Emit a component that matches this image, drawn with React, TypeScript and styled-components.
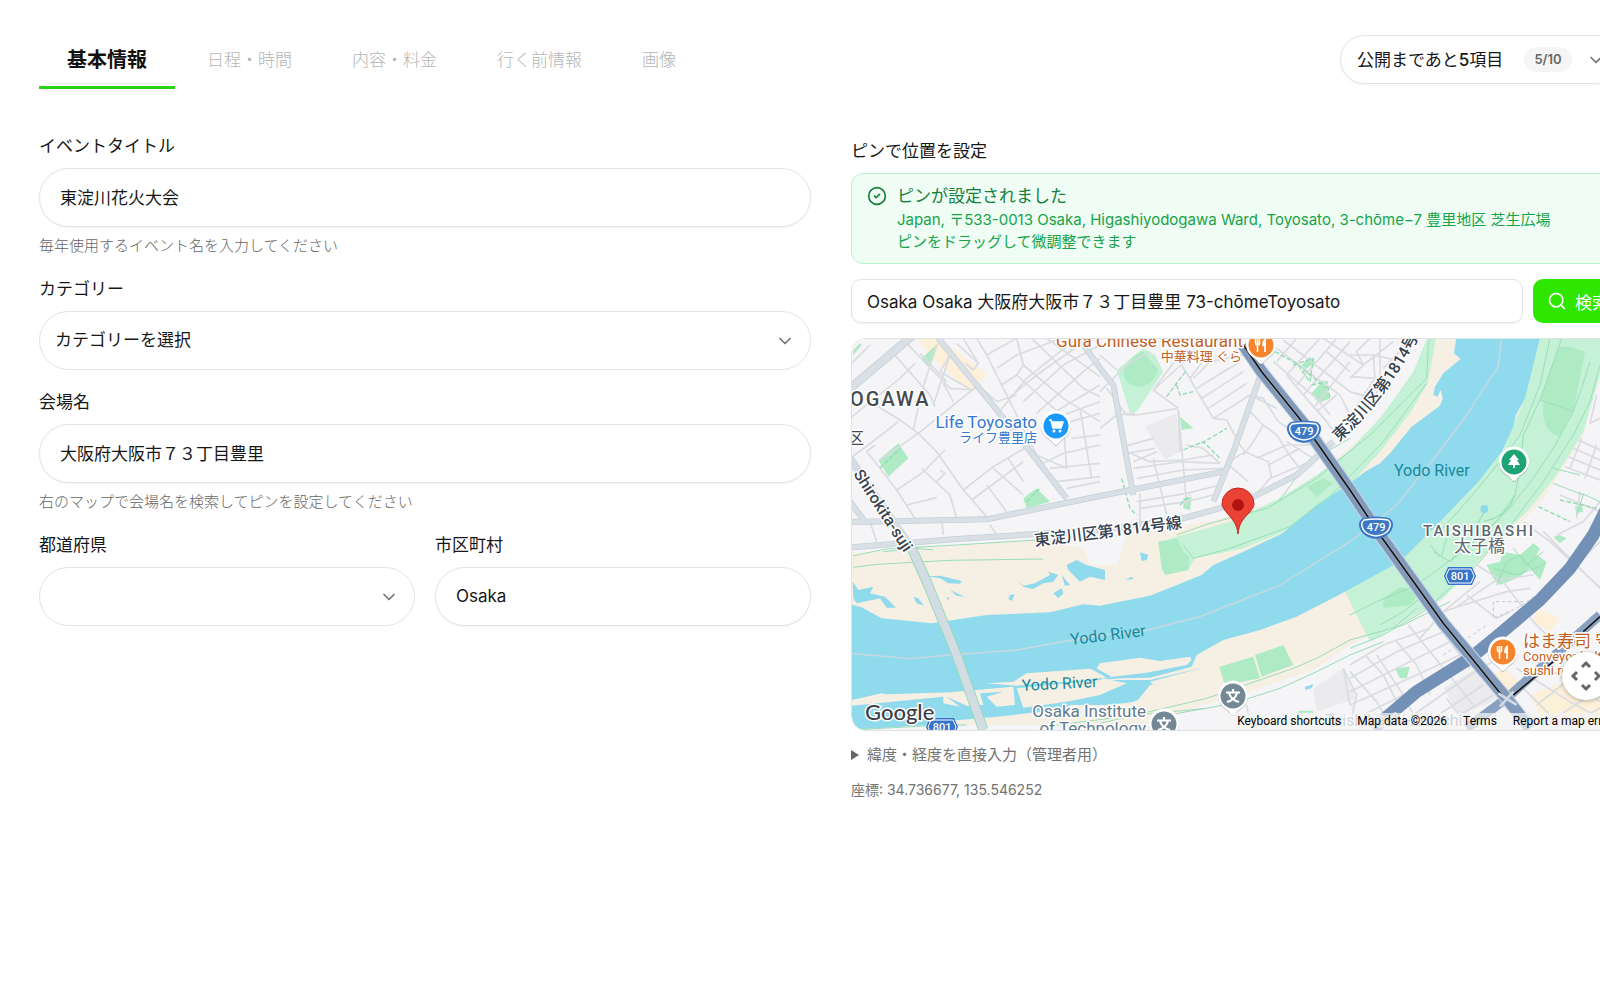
import React from 'react';
import styled, { createGlobalStyle } from 'styled-components';
import { ChevronDown, CircleCheck, Search } from 'lucide-react';

const GlobalStyle = createGlobalStyle`
  *, *::before, *::after { box-sizing: border-box; }
  html, body { margin: 0; background: #fff; overflow-x: hidden; }
  body, button, input, select {
    font-family: Inter, "Noto Sans CJK JP", sans-serif;
    font-size: 17px;
    color: #171717;
  }
`;

const Page = styled.div`
  width: calc(100% + 64px);
  padding: 35px 41px 40px 39px;
`;

const Header = styled.header`
  display: flex;
  justify-content: space-between;
  align-items: flex-start;
  margin-bottom: 44px;
`;

const Tabs = styled.nav`
  display: flex;
  gap: 4px;
`;

const Tab = styled.button<{ $active?: boolean }>`
  height: 54px;
  padding: 0 28px 2px;
  border: 0;
  border-bottom: 3px solid ${(p) => (p.$active ? '#2bd414' : 'transparent')};
  background: none;
  color: ${(p) => (p.$active ? '#111' : '#b5b5b5')};
  font-size: ${(p) => (p.$active ? 20 : 17)}px;
  font-weight: ${(p) => (p.$active ? 700 : 300)};
  line-height: 24px;
  white-space: nowrap;
`;

const ProgressPill = styled.button`
  display: flex;
  align-items: center;
  width: 283px;
  height: 49px;
  padding: 0 16px;
  border: 1px solid #e3e3e3;
  border-radius: 25px;
  background: #fff;
  box-shadow: 0 1px 2px rgba(0, 0, 0, 0.05);
  white-space: nowrap;
`;

const PillText = styled.span`
  flex: 1;
  padding-bottom: 2px;
  text-align: left;
  b { font-weight: 500; }
`;

const Count = styled.span`
  width: 48px;
  margin-right: 14px;
  border-radius: 13px;
  background: #f5f5f5;
  color: #666;
  font-size: 13px;
  font-weight: 600;
  line-height: 25px;
  text-align: center;
`;

const Columns = styled.main`
  display: grid;
  grid-template-columns: 1fr 1fr;
  gap: 40px;
  align-items: start;
  margin-top: 45px;
`;

const Form = styled.form`
  display: flex;
  flex-direction: column;
  gap: 20px;
`;

const FieldRow = styled.div`
  display: grid;
  grid-template-columns: 1fr 1fr;
  gap: 20px;
`;

const Field = styled.div`
  display: flex;
  flex-direction: column;
`;

const Label = styled.label`
  margin-bottom: 10px;
  line-height: 24px;
`;

const Hint = styled.p`
  margin: 8px 0 0;
  color: #666;
  font-size: 15px;
  font-weight: 300;
  line-height: 22px;
`;

const TextInput = styled.input`
  width: 100%;
  height: 59px;
  padding: 0 20px 2px;
  border: 1px solid #e3e3e3;
  border-radius: 30px;
  background: #fff;
  outline: 0;
  box-shadow: 0 1px 2px rgba(0, 0, 0, 0.05);
`;

const SelectBox = styled.div`
  display: grid;
  align-items: center;
  > * { grid-area: 1 / 1; }
  > svg { justify-self: end; margin-right: 16px; color: #737373; pointer-events: none; }
`;

const Select = styled.select`
  width: 100%;
  height: 59px;
  padding: 0 40px 2px 15px;
  border: 1px solid #e3e3e3;
  border-radius: 30px;
  background: #fff;
  appearance: none;
  outline: 0;
`;

const PinPanel = styled.section`
  display: flex;
  flex-direction: column;
  padding-top: 5px;
`;

const Notice = styled.div`
  display: flex;
  gap: 10px;
  padding: 10px 15px;
  border: 1px solid #b9f3cd;
  border-radius: 12px;
  background: #effdf4;
  color: #16a34a;
  font-size: 15px;
  line-height: 22px;
  > svg { flex: none; margin-top: 2px; color: #15803d; }
`;

const NoticeTitle = styled.div`
  color: #15803d;
  font-size: 17px;
  line-height: 25px;
`;

const SearchRow = styled.div`
  display: flex;
  gap: 10px;
  margin: 15px 0;
`;

const SearchInput = styled(TextInput)`
  flex: 1;
  width: auto;
  height: 44px;
  padding: 0 15px 2px;
  border-radius: 10px;
`;

const SearchButton = styled.button`
  display: flex;
  align-items: center;
  gap: 8px;
  height: 44px;
  padding: 0 14px;
  border: 0;
  border-radius: 10px;
  background: #2ee600;
  color: #fff;
  white-space: nowrap;
`;

const MapFrame = styled.div`
  position: relative;
  height: 393px;
  border: 1px solid #e0e3e3;
  border-radius: 15px;
  overflow: hidden;
  background: #f5f4f6;
  > svg { display: block; width: 100%; height: 100%; }
`;

const Attribution = styled.div`
  position: absolute;
  right: 0;
  bottom: 0;
  display: flex;
  align-items: center;
  gap: 16px;
  height: 17px;
  padding: 0 9px;
  background: rgba(245, 245, 245, 0.7);
  color: #000;
  font: 12px/17px Roboto, sans-serif;
  white-space: nowrap;
  a, button { padding: 0; border: 0; background: none; color: inherit; font: inherit; text-decoration: none; }
`;

const CameraButton = styled.button`
  position: absolute;
  right: 12px;
  bottom: 30px;
  width: 48px;
  height: 48px;
  padding: 4px;
  border: 0;
  border-radius: 50%;
  background: #fff;
  box-shadow: 0 1px 4px rgba(0, 0, 0, 0.3);
`;

const Details = styled.details`
  margin-top: 13px;
  color: #737373;
  font-size: 15px;
  line-height: 22px;
`;

const Summary = styled.summary`
  display: flex;
  align-items: center;
  gap: 8px;
  list-style: none;
  &::-webkit-details-marker { display: none; }
`;

const Coordinates = styled.p`
  margin: 13px 0 0;
  color: #737373;
  font-size: 14px;
  line-height: 22px;
`;

const MapText = styled.text<{ $size: number; $color: string; $weight?: number; $tracking?: number }>`
  font-family: Roboto, "Noto Sans CJK JP", sans-serif;
  font-size: ${(p) => p.$size}px;
  font-weight: ${(p) => p.$weight ?? 400};
  letter-spacing: ${(p) => p.$tracking ?? 0}px;
  fill: ${(p) => p.$color};
  stroke: #fff;
  stroke-width: 3px;
  stroke-linejoin: round;
  paint-order: stroke;
`;

const WaterText = styled(MapText)`
  stroke: none;
`;

const minorStreets = [
  // north-west blocks
  'M0 90L60 30 M0 250L150 130 195 85 M50 175L85 215 150 255 205 295 260 350 340 465 410 545',
  'M130 55L240 180 255 215 M165 20L300 160 370 165 M210 55L290 140 M260 30L215 170 190 285',
  'M300 60L250 210 M300 60L270 110 365 165 M205 295L385 150 440 200 M280 145L310 200 M320 25L385 85 370 105 345 85',
  'M340 10L385 85 M0 370L55 330 145 260 M75 330L50 350 90 400 140 465 195 550',
  'M90 375L205 295 M140 465L215 415 285 345 M170 510L260 488 M215 400L300 480 320 550',
  'M260 440L285 415 270 405 M340 465L430 395 540 330 M365 495L520 380 M430 400L520 480 M475 370L520 440 M410 450L470 530',
  'M440 200L500 180 M380 10L410 60 455 150 500 240 560 360 580 385 M410 60L500 10 M500 10L520 90 500 120 455 150',
  'M520 90L640 190 750 260 M545 10L700 160 750 185 M440 240L530 130 680 10 M475 190L560 120 710 15 M520 200L640 90 750 30',
  'M590 10L750 125 M560 235L700 110 750 70 M600 240L750 150 M500 120L600 210 660 260 M440 100L500 60 620 15',
  'M640 270L650 400 M690 220L725 430 M580 385L640 355 750 330 M600 400L700 390 750 385 M640 240L750 200 M660 260L750 235 M665 310L750 300',
  'M560 360L650 400 M620 440L750 425 M650 460L750 440 M275 550L280 600 M420 570L440 600',
  'M60 560L80 620',
  // centre blocks
  'M750 170L830 90 900 50 M770 160L830 240 860 240 M750 280L800 240 855 235 M985 225L990 350 M860 240L985 220',
  'M800 105L750 60 M985 220L910 165 980 70 1000 100 1020 130 1030 150 1090 250 1130 255 M910 165L1010 75 1050 10',
  'M1030 130L1080 80 1180 60 M1040 160L1170 80 M1055 190L1180 110 M1075 220L1190 145 M1090 250L1200 180 M1020 130L1110 10 M1010 80L960 10',
  'M1130 255L1170 330 1185 350 1255 380 1265 430 M1195 225L1240 270 1280 300 M1200 180L1240 190 1285 260 1340 300 M1220 190L1280 220',
  'M840 355L900 380 1000 375 1090 360 M850 400L990 380 1110 385 M860 430L1000 405 1120 400',
  'M820 335L910 310 M830 355L915 340 M910 370L950 540 M850 380L920 350 M870 475L870 560 M860 500L1010 475 1110 450 M870 520L1010 500 1090 480',
  'M985 225L1010 510 M1010 330L1060 340 1110 385 M1185 350L1130 385 1195 440',
  'M1180 360L1210 320 1240 270 M1220 370L1310 330 1430 330 M1255 390L1350 340 M1280 300L1325 370 1350 400 M1310 320L1390 370 M1340 300L1410 350',
  'M1200 500L1260 430 1370 385 1440 320',
  // north-east blocks
  'M1280 40L1400 130 1470 180 M1300 15L1500 170 M1270 80L1400 190 1440 240 M1340 10L1280 80 M1410 10L1310 120 M1460 10L1340 150',
  'M1500 20L1360 180 M1500 80L1390 220 M1310 120L1360 180 1430 260 1460 300 M1430 50L1500 110 M1460 180L1400 230',
  'M1500 130L1540 90 1520 50 1560 10 M1540 90L1630 20 M1500 60L1570 60 1660 80 M1570 60L1575 130 1500 125 M1590 10L1590 130 M1575 130L1515 220 1510 290',
  'M1500 170L1570 190 1600 140 M1470 180L1500 240 1500 290 M1420 10L1540 90 M1600 100L1680 20',
  // east bank blocks
  'M2185 315L2250 345 M2170 340L2250 375 M2155 365L2250 405 M2145 395L2250 435 M2195 310L2160 400 M2240 330L2205 430 M2250 250L2220 265 2240 180',
  'M2250 500L2200 560 2120 600 M2130 480L2250 530 M2190 470L2180 550',
  'M2020 560L2100 620 2220 730 2300 800 M2080 590L2250 760 M2180 690L2250 620',
  'M1880 690L1960 740 2050 860 2110 920 M1890 740L1780 830 1710 910 M1850 780L1940 850 1980 830 M1820 815L1940 735 2050 720 M1750 840L1840 810 1970 770 2040 760',
  'M1675 870L1740 950 1830 1060 1870 1110 M1740 840L1860 1000 M1640 920L1700 990 1740 1080 M1545 960L1600 1020 1650 1120 M1500 990L1600 930 1740 880',
  'M1500 1030L1640 950 1780 890 M1500 1070L1660 990 1800 920 M1500 1110L1700 1020 1830 960 M1520 1150L1720 1050 M1500 1010L1580 1100 1620 1170 M1580 960L1660 1080 1690 1140',
  'M1690 1140L1860 1020 1960 960 M1720 1170L1900 1050 M1780 1170L1930 1080 M1830 1130L1880 1170 M1790 1090L1850 1170',
  'M2030 960L2250 1100 M2000 1000L2160 1100 2250 1150 M2060 1110L2200 1000 2250 960 M2020 1060L2120 1160 M2100 1160L2250 1060 M2150 1170L2250 1120',
  'M1480 1000L1520 1080 1500 1170 M1480 1000L1500 1110 M1190 1110L1200 1170',
];

const bankPaths = [
  'M10 662L110 642 320 630 560 615 M10 697L80 688 300 676 580 672 M100 650L200 640 250 645',
  'M980 600L1080 565 1250 520 1400 430 1560 300 1660 200 1730 130 1735 30 1740 10',
  'M1000 630L1030 670 1140 640 1320 575 1440 485 1600 320 1730 145 M1285 500L1330 440 1360 390 1500 310',
  'M2100 10L2070 150 2010 300 1950 380 1850 500 1760 600',
  'M2220 80L2195 160 2165 240 2110 340 2050 430 1970 530 1850 640 1700 750 1580 800 1500 840',
  'M2135 10L2090 140 2070 195 2170 230 M2070 195L2020 300 2010 400 1995 480 1940 560 1800 680',
  'M2250 90L2220 200 2170 300 2080 440 1990 560 1880 690 1720 830 1600 900 1500 940',
  'M750 1165L1070 1090 1200 1045 1330 1000 1400 970 1500 915 1660 870 1800 800',
  'M900 1150L1150 1105 1290 1060 1400 1010 1500 960 1600 920',
  'M620 1170L860 1140 1070 1120 M0 1185L240 1172 350 1170',
  'M1775 660L1790 610 M1750 650L1800 680 1830 645 M1740 630L1770 665 M1590 870L1660 830 1710 790 M1630 880L1700 820',
  'M1940 750L1970 680 2010 660 2060 720 M1930 700L2000 720 2080 690 M1990 640L2030 690 2080 650',
  'M2190 420L2110 400 M2110 445L2200 480 2180 540 M2195 475L2250 500',
];

const dashedPaths = [
  'M950 185L1010 105 M980 150L990 180 1030 170 M1000 345L1060 320 1110 370 M1055 325L1130 280',
  'M815 430L840 520 860 540 M990 510L1020 480 M1275 50L1330 80 1430 160',
  'M1330 90L1390 70 1380 140 1350 100 M1385 150L1430 140 1440 190',
  'M2065 515L2160 560 M2130 495L2240 520 M90 400L150 340 M530 500L570 460',
];

const regionalShields = [
  { x: 1304, y: 432, text: '479' },
  { x: 1376, y: 528, text: '479' },
];

const prefecturalShields = [
  { x: 1460, y: 576 },
  { x: 942, y: 727 },
];

function Place({ x, y, color, children }: { x: number; y: number; color: string; children: React.ReactNode }) {
  return (
    <g transform={`translate(${x} ${y})`}>
      <path d="M-14 5A15 15 0 1 1 14 5C12 11 5 13 2 18Q0 20-2 18C-5 13-12 11-14 5Z" fill="#59636b" opacity=".35" transform="translate(0 1)" />
      <path d="M-14 5A15 15 0 1 1 14 5C12 11 5 13 2 18Q0 20-2 18C-5 13-12 11-14 5Z" fill="#fff" />
      <circle r="12.5" fill={color} />
      {children}
    </g>
  );
}

function Utensils() {
  return (
    <g fill="#fff" stroke="#fff">
      <path d="M-5.500-6V-2.500Q-5.500 0-3.500 0Q-1.500 0-1.500-2.500V-6M-3.500-6V7" fill="none" strokeWidth="1.500" />
      <path d="M4.500-6.500Q1.500-5 1.500-1V1H4.500Z" strokeWidth=".5" />
      <path d="M4-6V7" strokeWidth="1.700" />
    </g>
  );
}

function School() {
  return <path d="M0-7V-4M-7-3.500H7M-4-3Q-2 4 6 6M4-3Q2 4-6 6" fill="none" stroke="#fff" strokeWidth="2.200" />;
}

function MapDrawing() {
  return (
    <svg viewBox="852 339 770 391" preserveAspectRatio="xMinYMin slice" role="img" aria-label="地図">
      <defs>
        <path id="bank-road" d="M1339 442Q1390 396 1423 328" />
      </defs>
      <g transform="translate(850 335) scale(.33333)" fill="none" strokeLinejoin="round">
        <rect width="2340" height="1200" fill="#f5f4f6" />

        {/* commercial blocks */}
        <path d="M200 10H265L410 115 365 175 255 75ZM2060 820L2130 850 2100 890 2050 860ZM1890 1050L1960 1000 2010 1040 1960 1110ZM2040 1080L2250 1000V1170H2080Z" fill="#fdf0d8" />
        <path d="M885 275L980 235 990 350 945 375ZM1390 1060L1480 1000 1520 1090 1400 1130ZM1780 1060L1880 1000 1950 1090 1830 1140Z" fill="#ebeaec" />

        {/* river banks */}
        <path d="M0 655L560 615 700 640 720 690 800 690 830 600 1100 555 1300 490 1430 400 1570 270 1660 165 1720 60 1735 0H2250V110L2200 300 2090 480 1980 600 1740 820 1500 930 1400 1000 1200 1070 1060 1110 880 1170H0Z" fill="#f5efe4" />

        {/* parks along the river */}
        <path d="M1735 0L1690 110 1590 250 1500 345 1400 420 1290 490 1140 560 980 605 925 625 960 715 1015 705 1035 670 1180 640 1280 600 1400 530 1500 450 1590 350 1680 235 1733 145 1760 0Z" fill="#c5f2d6" />
        <path d="M1370 455L1420 430 1450 445 1400 485ZM925 620L980 610 1000 650 1018 665 1015 705 945 720 935 700Z" fill="#aeebc5" />
        <path d="M2070 0H2250V120L2200 290 2120 420 2040 520 1940 620 1780 790 1560 920 1485 770 1650 680 1740 580 1850 460 1960 340 2025 190Z" fill="#c5f2d6" />
        <path d="M2125 40Q2140 25 2205 50L2170 230 2070 195ZM2080 200L2165 230 2130 305Q2070 290 2080 200ZM1600 790L1650 755 1710 775 1680 810 1600 820Z" fill="#aeebc5" />
        <path d="M1910 690L1950 680 1960 650 2010 660 2050 625 2070 640 2060 660 2090 680 2070 735 2040 700 2010 725 1950 750 1930 730ZM2110 605L2130 600 2150 610 2130 625Z" fill="#aeebc5" />
        <path d="M1108 995L1210 965 1230 1030 1125 1050ZM1215 960L1300 930 1330 990 1235 1025ZM1345 1127H1390V1133H1345ZM1635 1000L1680 995 1670 1030 1650 1030Z" fill="#aeebc5" />
        <path d="M800 105L880 40 915 60 940 110 860 230 840 235Z" fill="#c5f2d6" />
        <path d="M820 110Q840 60 880 50L925 105Q910 150 870 155Q820 150 820 110ZM85 375L145 325 175 370 115 425ZM215 70L265 25 240 100ZM520 490L560 460 600 500 530 520ZM990 245L1030 280 995 285ZM1000 490L1025 485 1020 525 1000 520ZM1385 175L1420 135 1440 190 1405 205ZM1355 90L1380 65 1395 80 1365 105ZM10 45L30 25 35 30 10 60ZM2175 515L2195 510 2200 530 2180 535Z" fill="#aeebc5" />

        {/* Yodo River */}
        <path d="M0 808L35 817 95 850 245 865 410 840 600 832 700 808 750 812 900 782 1055 720 1090 690 1180 650 1295 596 1400 510 1500 445 1545 410 1590 385 1620 355 1685 275 1770 212 1778 190 1772 165 1762 185 1750 180 1755 155 1780 115 1832 72 1812 55 1820 0H2072L2045 110 2025 190 1998 240 1990 275 1955 350 1885 440 1770 560 1650 680 1485 770 1340 845 1230 885 1120 915 1040 960 1025 995 900 1028 810 1030 760 1035 900 1035 1070 995 900 1040 930 1070 850 1100 820 1110 660 1110 590 1170H240L0 1185Z" fill="#90daed" />
        <path d="M5 1095L95 1075 110 1078 300 1072 490 1055 495 1110 440 1115 410 1085 460 1070 390 1075 400 1110 350 1112 290 1085 330 1115 280 1105 280 1085 5 1112ZM410 1045L490 1040 530 1015 740 1000 750 985 870 968 930 978 1020 965 1025 975 1010 990 890 1013 750 1030 690 1037 580 1045 500 1052ZM500 1060L750 1035 760 1030 830 1045 750 1080 650 1100 520 1118ZM0 1110L15 1190 0 1190ZM270 1160L440 1145 860 1100 900 1050 1000 1040 880 1170H270Z" fill="#f5efe4" />
        <path d="M720 995L780 1028M840 1045L838 1100" stroke="#90daed" strokeWidth="9" />
        <path d="M0 955L180 971 300 960 500 945 750 900 880 888 1050 845 1290 750 1500 620 1640 510 1760 360 1850 240 1945 95 1955 0" stroke="#cbd7df" strokeWidth="4" />

        {/* ponds */}
        <path d="M8 740L25 765 70 755 60 775 105 785 138 818 110 818 90 790 20 805 10 790ZM190 785L205 790 222 812 200 805ZM230 724L270 722 335 738 330 746 295 745 270 730ZM300 765L345 785 320 782ZM290 785L298 790 292 795ZM500 735L520 752 555 745 600 720 595 710 625 720 610 740 580 745 550 762 520 755ZM610 775L635 760 640 775 625 790ZM480 780L495 778 485 798 475 792ZM635 720L660 750 645 752ZM650 690L680 675 710 690 765 705 765 735 720 725 690 740 655 705ZM870 652L895 660 890 675 875 678ZM825 735L845 725 850 732ZM1365 1055L1390 1048 1385 1060 1365 1065Z" fill="#90daed" />

        {/* street network */}
        <g stroke="#d9dce1" strokeWidth="5">
          {minorStreets.map((d) => <path key={d} d={d} />)}
        </g>
        <g stroke="#9bdcb8" strokeWidth="3">
          {bankPaths.map((d) => <path key={d} d={d} />)}
        </g>
        <g stroke="#8fdcae" strokeWidth="4" strokeDasharray="14 6">
          {dashedPaths.map((d) => <path key={d} d={d} />)}
        </g>
        <path d="M1980 10H2250M2020 800H1930V850L2000 820 2060 780M1780 960L1910 870" stroke="#c5c8cd" strokeWidth="3" strokeDasharray="10 8" />

        {/* main roads */}
        <g stroke="#c3ced7" strokeWidth="18">
          <path d="M265 10L400 175 510 310 650 490M0 560H50L410 553 750 483 1120 410M750 100L790 150 850 480M1230 125L1150 350 1090 500M0 637L320 612 750 585 1000 550 1180 500 1340 420 1450 320M0 500L45 560M680 0L750 100" />
          <path d="M0 160L190 0" strokeWidth="26" />
        </g>
        <g stroke="#d8e0e6" strokeWidth="14">
          <path d="M265 10L400 175 510 310 650 490M0 560H50L410 553 750 483 1120 410M750 100L790 150 850 480M1230 125L1150 350 1090 500M0 637L320 612 750 585 1000 550 1180 500 1340 420 1450 320M0 500L45 560M680 0L750 100" />
          <path d="M0 160L190 0" strokeWidth="22" />
        </g>
        <path d="M0 370L80 490 185 640" stroke="#d3dce2" strokeWidth="25" />
        <path d="M185 640L230 740 320 960 400 1185" stroke="#8fd8b0" strokeWidth="30" />
        <path d="M185 640L230 740 320 960 400 1185" stroke="#d3dce2" strokeWidth="25" />

        {/* trunk roads and railways */}
        <path d="M1570 1180L1700 1070 1860 970 1940 905 2070 795 2160 700 2230 600 2290 480" stroke="#7391b7" strokeWidth="38" />
        <path d="M1850 1180L1970 1090 2250 840" stroke="#88a0c1" strokeWidth="28" />
        <path d="M1180 30L1235 110 1360 265 1500 465 1590 600 1780 865 1970 1090 2040 1180" stroke="#c8d4e3" strokeWidth="40" />
        <path d="M1180 30L1235 110 1360 265 1500 465 1590 600 1780 865 1970 1090 2040 1180" stroke="#819abb" strokeWidth="34" />
        <path d="M1180 30L1235 110 1360 265 1500 465 1590 600 1780 865 1955 1080M1990 1080L2110 980M2200 890L2250 845" stroke="#a5aeba" strokeWidth="9" />
        <path d="M1180 30L1235 110 1360 265 1500 465 1590 600 1780 865 1955 1080M1990 1080L2110 980M2200 890L2250 845" stroke="#14181d" strokeWidth="5" />
        <path d="M1945 1075L2000 1110M1990 1070L1950 1115" stroke="#d3dae3" strokeWidth="8" />
        <path d="M1995 480Q1975 545 1900 560M1880 570L1903 530" stroke="#8fd8b0" strokeWidth="3" />
        <circle cx="1903" cy="522" r="12" fill="#90daed" />
      </g>

      <MapText x="1243" y="347" textAnchor="end" $size={17} $color="#c4601d">Gura Chinese Restaurant</MapText>
      <MapText x="1242" y="361" textAnchor="end" $size={13} $color="#c4601d">中華料理 ぐら</MapText>
      <MapText x="1037" y="428" textAnchor="end" $size={17} $color="#3478d4">Life Toyosato</MapText>
      <MapText x="1037" y="442" textAnchor="end" $size={13} $color="#3478d4">ライフ豊里店</MapText>
      <MapText x="850" y="406" $size={20} $color="#454a50" $weight={500} $tracking={2}>OGAWA</MapText>
      <MapText x="848" y="444" $size={16} $color="#454a50">区</MapText>
      <MapText transform="translate(853 474) rotate(57)" $size={16} $color="#3b4350" $weight={500}>Shirokita-suji</MapText>
      <MapText transform="translate(1035 546) rotate(-7)" $size={16} $color="#34414f" $weight={500}>東淀川区第1814号線</MapText>
      <MapText $size={16} $color="#34414f" $weight={500}><textPath href="#bank-road">東淀川区第1814号</textPath></MapText>
      <WaterText x="1394" y="476" $size={16} $color="#188899">Yodo River</WaterText>
      <WaterText transform="translate(1071 645) rotate(-7)" $size={16} $color="#188899">Yodo River</WaterText>
      <WaterText transform="translate(1022 691) rotate(-3)" $size={16} $color="#188899">Yodo River</WaterText>
      <MapText x="1146" y="717" textAnchor="end" $size={17} $color="#607b8d">Osaka Institute</MapText>
      <MapText x="1146" y="734" textAnchor="end" $size={17} $color="#607b8d">of Technology</MapText>
      <MapText x="1423" y="536" $size={15} $color="#5c6670" $weight={500} $tracking={2}>TAISHIBASHI</MapText>
      <MapText x="1454" y="552" $size={17} $color="#5c6670">太子橋</MapText>
      <MapText x="1523" y="647" $size={17} $color="#c4601d">はま寿司 守口</MapText>
      <MapText x="1523" y="661" $size={13} $color="#c4601d">Conveyor belt</MapText>
      <MapText x="1523" y="675" $size={13} $color="#c4601d">sushi restaurant</MapText>
      <MapText x="1325" y="726" $size={16} $color="#7e8790">Taishibashi-Imaichi</MapText>

      {regionalShields.map((s) => (
        <g key={s.y} transform={`translate(${s.x} ${s.y})`}>
          <path d="M-13-9Q0-12 13-9Q18-5 15 1Q11 9 0 10Q-11 9-15 1Q-18-5-13-9Z" fill="#3d78c5" stroke="#3d78c5" strokeWidth="2" />
          <path d="M-12-8Q0-10 12-8Q16-5 13 1Q10 7 0 8Q-10 7-13 1Q-16-5-12-8Z" fill="#3d78c5" stroke="#fff" strokeWidth="1.500" />
          <text y="3" textAnchor="middle" fontFamily="Roboto, sans-serif" fontSize="11" fontWeight="500" fill="#fff">{s.text}</text>
        </g>
      ))}
      {prefecturalShields.map((s) => (
        <g key={s.y} transform={`translate(${s.x} ${s.y})`}>
          <path d="M-12-9H12L16 0 12 9H-12L-16 0Z" fill="#3673c9" />
          <path d="M-11-7H11L14 0 11 7H-11L-14 0Z" fill="#3673c9" stroke="#fff" />
          <text y="4" textAnchor="middle" fontFamily="Roboto, sans-serif" fontSize="11" fontWeight="500" fill="#fff">801</text>
        </g>
      ))}

      <Place x={1056} y={426} color="#1a98fb">
        <path d="M-7-6H-5L-3 2H5L7-4H-4" fill="#fff" stroke="#fff" strokeWidth="1.500" strokeLinejoin="round" />
        <circle cx="-2" cy="5" r="1.500" fill="#fff" /><circle cx="4" cy="5" r="1.500" fill="#fff" />
      </Place>
      <Place x={1261} y={345} color="#f5842c"><Utensils /></Place>
      <Place x={1514} y={462} color="#1ea474">
        <path d="M0-8L5-2H3L6 3H1V6H-1V3H-6L-3-2H-5Z" fill="#fff" />
      </Place>
      <Place x={1503} y={652} color="#f5842c"><Utensils /></Place>
      <Place x={1233} y={696} color="#738a96"><School /></Place>
      <Place x={1164} y={724} color="#738a96"><School /></Place>

      <path d="M1238 534C1237 524 1233 520 1227 513Q1222 507 1222 504A16 16 0 1 1 1254 504Q1254 507 1249 513C1242 520 1239 524 1238 534Z" fill="#ea4335" stroke="#c5221f" />
      <circle cx="1238" cy="505" r="6" fill="#b31412" />

      <text x="865" y="720" fontFamily="Lato, sans-serif" fontSize="22" fontWeight="500" fill="#3c4043" stroke="#fff" strokeWidth="3" paintOrder="stroke">Google</text>
    </svg>
  );
}

export default function App() {
  return (
    <>
      <GlobalStyle />
      <Page>
        <Header>
          <Tabs>
            <Tab type="button" $active>基本情報</Tab>
            <Tab type="button">日程・時間</Tab>
            <Tab type="button">内容・料金</Tab>
            <Tab type="button">行く前情報</Tab>
            <Tab type="button">画像</Tab>
          </Tabs>
          <ProgressPill type="button">
            <PillText>公開まであと<b>5</b>項目</PillText>
            <Count>5/10</Count>
            <ChevronDown size={20} color="#737373" />
          </ProgressPill>
        </Header>

        <Columns>
          <Form>
            <Field>
              <Label htmlFor="title">イベントタイトル</Label>
              <TextInput id="title" defaultValue="東淀川花火大会" />
              <Hint>毎年使用するイベント名を入力してください</Hint>
            </Field>
            <Field>
              <Label htmlFor="category">カテゴリー</Label>
              <SelectBox>
                <Select id="category"><option>カテゴリーを選択</option></Select>
                <ChevronDown size={20} />
              </SelectBox>
            </Field>
            <Field>
              <Label htmlFor="venue">会場名</Label>
              <TextInput id="venue" defaultValue="大阪府大阪市７３丁目豊里" />
              <Hint>右のマップで会場名を検索してピンを設定してください</Hint>
            </Field>
            <FieldRow>
              <Field>
                <Label htmlFor="prefecture">都道府県</Label>
                <SelectBox>
                  <Select id="prefecture"><option value="" /></Select>
                  <ChevronDown size={20} />
                </SelectBox>
              </Field>
              <Field>
                <Label htmlFor="city">市区町村</Label>
                <TextInput id="city" defaultValue="Osaka" />
              </Field>
            </FieldRow>
          </Form>

          <PinPanel>
            <Label htmlFor="place">ピンで位置を設定</Label>
            <Notice role="status">
              <CircleCheck size={20} />
              <div>
                <NoticeTitle>ピンが設定されました</NoticeTitle>
                <div>Japan, 〒533-0013 Osaka, Higashiyodogawa Ward, Toyosato, 3-chōme−7 豊里地区 芝生広場</div>
                <div>ピンをドラッグして微調整できます</div>
              </div>
            </Notice>
            <SearchRow>
              <SearchInput id="place" defaultValue="Osaka Osaka 大阪府大阪市７３丁目豊里 73-chōmeToyosato" />
              <SearchButton type="button"><Search size={20} />検索</SearchButton>
            </SearchRow>
            <MapFrame>
              <MapDrawing />
              <Attribution>
                <button type="button">Keyboard shortcuts</button>
                <span>Map data ©2026</span>
                <a href="#terms">Terms</a>
                <a href="#report">Report a map error</a>
              </Attribution>
              <CameraButton type="button" aria-label="Map camera controls">
                <svg viewBox="0 0 40 40" width="40" height="40" fill="none" stroke="#666" strokeWidth="3">
                  <path d="M16 11L20 7 24 11M16 29L20 33 24 29M11 16L7 20 11 24M29 16L33 20 29 24" />
                </svg>
              </CameraButton>
            </MapFrame>
            <Details>
              <Summary>
                <svg width="8" height="10" viewBox="0 0 8 10" fill="#666"><path d="M0 0L8 5 0 10Z" /></svg>
                緯度・経度を直接入力（管理者用）
              </Summary>
            </Details>
            <Coordinates>座標: 34.736677, 135.546252</Coordinates>
          </PinPanel>
        </Columns>
      </Page>
    </>
  );
}
